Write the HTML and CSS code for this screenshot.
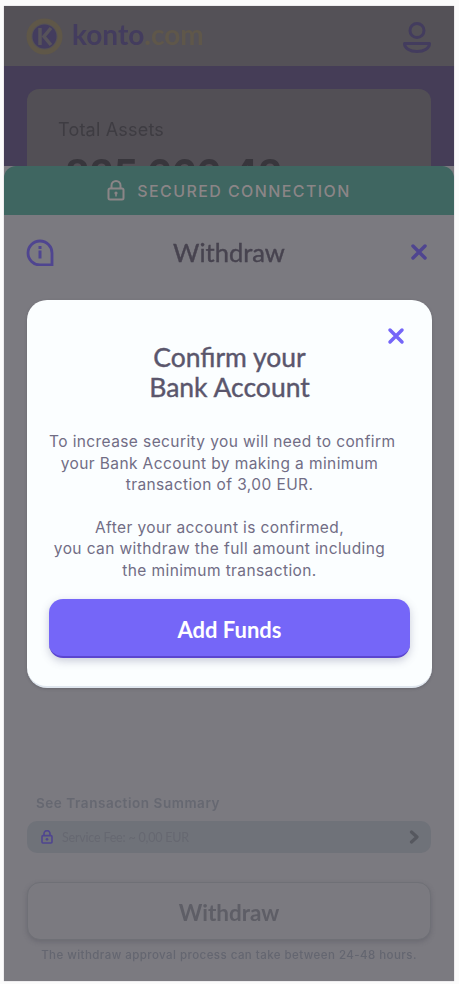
FILE: index.html
```html
<!DOCTYPE html>
<html lang="en">
<head>
    <meta charset="UTF-8">
    <meta name="viewport" content="width=device-width, initial-scale=1.0">
    <title>Konto.com - Withdraw</title>
    <link rel="stylesheet" href="styles.css">
</head>
<body>
    <div class="phone">
        <div class="page">
            <div class="topbar">
                <div class="logo">
                    <svg class="logo-mark" width="37" height="37" viewBox="0 0 37 37">
                        <circle cx="18.500" cy="18.500" r="15.500" fill="none" stroke="#5f5748" stroke-width="5"/>
                        <circle cx="18.500" cy="18.500" r="12" fill="#433c5e"/>
                        <path d="M14 10v17M25 10l-7 8.500 7 8.500" fill="none" stroke="#57535a" stroke-width="3.500"/>
                    </svg>
                    <span class="logo-text">konto<span class="logo-com">.com</span></span>
                </div>
                <svg class="user-icon" width="30" height="34" viewBox="0 0 30 34">
                    <circle cx="15" cy="11.500" r="7" fill="none" stroke="#433c5e" stroke-width="3"/>
                    <path d="M2.500 24.500h25c0 4.500-5 8-12.500 8s-12.500-3.500-12.500-8z" fill="none" stroke="#433c5e" stroke-width="3" stroke-linejoin="round"/>
                </svg>
            </div>
            <div class="assets-band">
                <div class="assets-card">
                    <div class="assets-label">Total Assets</div>
                    <div class="assets-value">825 666.42</div>
                </div>
            </div>
        </div>

        <div class="sheet">
            <div class="secure-bar">
                <svg width="18" height="21" viewBox="0 0 18 21">
                    <path d="M4.500 9V5.500a4.500 4.500 0 0 1 9 0V9" fill="none" stroke="#8b8587" stroke-width="2"/>
                    <rect x="1.500" y="8.500" width="15" height="11" rx="1.500" fill="none" stroke="#8b8587" stroke-width="2"/>
                    <circle cx="9" cy="13" r="1.600" fill="#8b8587"/>
                    <rect x="8.200" y="13" width="1.600" height="3.500" fill="#8b8587"/>
                </svg>
                <span>SECURED CONNECTION</span>
            </div>
            <div class="sheet-body">
                <div class="sheet-head">
                    <svg width="28" height="27" viewBox="0 0 28 27">
                        <path d="M14 2a12 12 0 1 0 0 24h12V14A12 12 0 0 0 14 2z" fill="none" stroke="#4f4590" stroke-width="2.800"/>
                        <rect x="12.500" y="11.500" width="3" height="8" fill="#4f4590"/>
                        <rect x="12.500" y="7" width="3" height="3" fill="#4f4590"/>
                    </svg>
                    <h1>Withdraw</h1>
                    <svg class="head-close" width="18" height="18" viewBox="0 0 18 18">
                        <path d="M3 3l12 12M15 3L3 15" stroke="#4f4590" stroke-width="3.500" stroke-linecap="round"/>
                    </svg>
                </div>
                <div class="sheet-bottom">
                    <div class="summary-label">See Transaction Summary</div>
                    <div class="summary-row">
                        <svg width="12" height="14" viewBox="0 0 18 21">
                            <path d="M4.500 9V5.500a4.500 4.500 0 0 1 9 0V9" fill="none" stroke="#4f4590" stroke-width="2.400"/>
                            <rect x="1.500" y="8.500" width="15" height="11" rx="1.500" fill="none" stroke="#4f4590" stroke-width="2.400"/>
                            <circle cx="9" cy="14" r="2" fill="#4f4590"/>
                        </svg>
                        <span class="summary-text">Service Fee: ~ 0,00 EUR</span>
                        <svg class="chevron" width="11" height="14" viewBox="0 0 11 14">
                            <path d="M2.500 2l5.500 5-5.500 5" fill="none" stroke="#56585f" stroke-width="3.200" stroke-linecap="round" stroke-linejoin="round"/>
                        </svg>
                    </div>
                    <button class="withdraw-btn">Withdraw</button>
                    <p class="approval-note">The withdraw approval process can take between 24-48 hours.</p>
                </div>
            </div>
        </div>

        <div class="modal">
            <svg class="modal-close" width="18" height="18" viewBox="0 0 18 18">
                <path d="M3 3l12 12M15 3L3 15" stroke="#7566f8" stroke-width="3.500" stroke-linecap="round"/>
            </svg>
            <h2>Confirm your<br>Bank Account</h2>
            <p>To increase security you will need to confirm<br>your Bank Account by making a minimum<br>transaction of 3,00 EUR.</p>
            <p>After your account is confirmed,<br>you can withdraw the full amount including<br>the minimum transaction.</p>
            <button class="add-funds">Add Funds</button>
        </div>
    </div>
</body>
</html>
```

FILE: styles.css
```css
* {
    margin: 0;
    padding: 0;
    box-sizing: border-box;
}

body {
    background-color: #fbfbfb;
    font-family: Inter, "Liberation Sans", sans-serif;
    padding: 6px 5px 3px 4px;
    height: 984px;
    overflow: hidden;
}

.phone {
    position: relative;
    width: 450px;
    height: 975px;
    background-color: #7b7a80;
    overflow: hidden;
    box-shadow: 0 0 1px #a9a8b4;
}

.page {
    height: 160px;
    overflow: hidden;
    filter: blur(0.6px);
}

.topbar {
    height: 60px;
    background-color: #545157;
    padding: 0 22px;
    display: flex;
    justify-content: space-between;
    align-items: center;
}

.logo {
    display: flex;
    align-items: center;
    gap: 9px;
}

.logo-text {
    font-family: Lato, sans-serif;
    font-size: 28px;
    font-weight: 700;
    color: #433c5e;
    padding-bottom: 4px;
}

.logo-com {
    color: #5f574a;
}

.assets-band {
    height: 100px;
    background-color: #453d57;
    padding: 23px 23px 0;
}

.assets-card {
    height: 100px;
    background-color: #524f55;
    border-radius: 12px;
    padding: 30px 31px;
}

.assets-label {
    font-size: 18px;
    letter-spacing: 0.2px;
    color: #3e3c42;
}

.assets-value {
    font-size: 38px;
    font-weight: 700;
    color: #38363c;
    margin-top: 10px;
    padding-left: 7px;
}

.sheet {
    position: absolute;
    top: 160px;
    left: 0;
    right: 0;
    bottom: 0;
}

.secure-bar {
    height: 49px;
    background-color: #3f6661;
    border-radius: 12px 12px 0 0;
    display: flex;
    justify-content: center;
    align-items: center;
    gap: 12px;
    font-size: 16px;
    font-weight: 500;
    letter-spacing: 1.4px;
    color: #8b8587;
}

.sheet-body {
    height: 766px;
    background-color: #7b7a80;
    display: flex;
    flex-direction: column;
    justify-content: space-between;
    filter: blur(0.5px);
}

.sheet-head {
    display: grid;
    grid-template-columns: 1fr auto 1fr;
    align-items: center;
    padding: 22px 22px 0;
}

.head-close {
    justify-self: end;
    margin-right: 4px;
}

.sheet-head h1 {
    font-family: Lato, sans-serif;
    font-size: 25.500px;
    font-weight: 400;
    -webkit-text-stroke: 0.4px #47434f;
    color: #47434f;
}

.sheet-bottom {
    padding: 0 23px 19px;
}

.summary-label {
    font-size: 13.500px;
    font-weight: 600;
    letter-spacing: 0.55px;
    color: #666871;
    padding-left: 9px;
    margin-bottom: 10px;
}

.summary-row {
    height: 32px;
    background-color: #6f7279;
    border-radius: 10px;
    display: flex;
    align-items: center;
    gap: 9px;
    padding: 0 11px 0 14px;
    margin-bottom: 29px;
}

.summary-text {
    flex: 1;
    font-family: Lato, sans-serif;
    font-size: 12.500px;
    letter-spacing: -0.2px;
    color: #666871;
}

.withdraw-btn {
    display: block;
    width: 100%;
    height: 58px;
    background-color: #7b7a80;
    border: 1px solid #6f7076;
    border-radius: 13px;
    box-shadow: 0 2px 5px rgba(70, 70, 80, 0.3);
    font-family: Lato, sans-serif;
    font-size: 22.500px;
    font-weight: 700;
    color: #5e5e66;
    padding-top: 2px;
    margin-bottom: 8px;
}

.approval-note {
    font-size: 11.500px;
    font-weight: 500;
    letter-spacing: 0.45px;
    white-space: nowrap;
    color: #646670;
    text-align: center;
}

.modal {
    position: absolute;
    top: 294px;
    left: 23px;
    width: 405px;
    height: 388px;
    background-color: #fbfeff;
    border-radius: 20px;
    border-bottom: 2px solid #dfe6ee;
    padding: 42px 22px 0;
    text-align: center;
    box-shadow: 0 1px 3px rgba(60, 60, 70, 0.3);
}

.modal-close {
    position: absolute;
    top: 27px;
    right: 27px;
}

.modal h2 {
    font-family: Lato, sans-serif;
    font-size: 26.500px;
    font-weight: 400;
    -webkit-text-stroke: 0.4px #5a566c;
    line-height: 30px;
    color: #5a566c;
    margin-bottom: 29px;
}

.modal p {
    font-size: 15.500px;
    line-height: 21.500px;
    letter-spacing: 0.4px;
    white-space: nowrap;
    color: #716d85;
    padding-right: 20px;
    margin-bottom: 21px;
}

.add-funds {
    display: block;
    width: 100%;
    height: 59px;
    margin-top: -3px;
    background-color: #7566f8;
    border: none;
    border-bottom: 2px solid #5b45cf;
    border-radius: 14px;
    box-shadow: 0 3px 8px rgba(90, 90, 130, 0.3);
    font-family: Lato, sans-serif;
    font-size: 22px;
    font-weight: 700;
    color: #ffffff;
    padding-top: 4px;
}
```
